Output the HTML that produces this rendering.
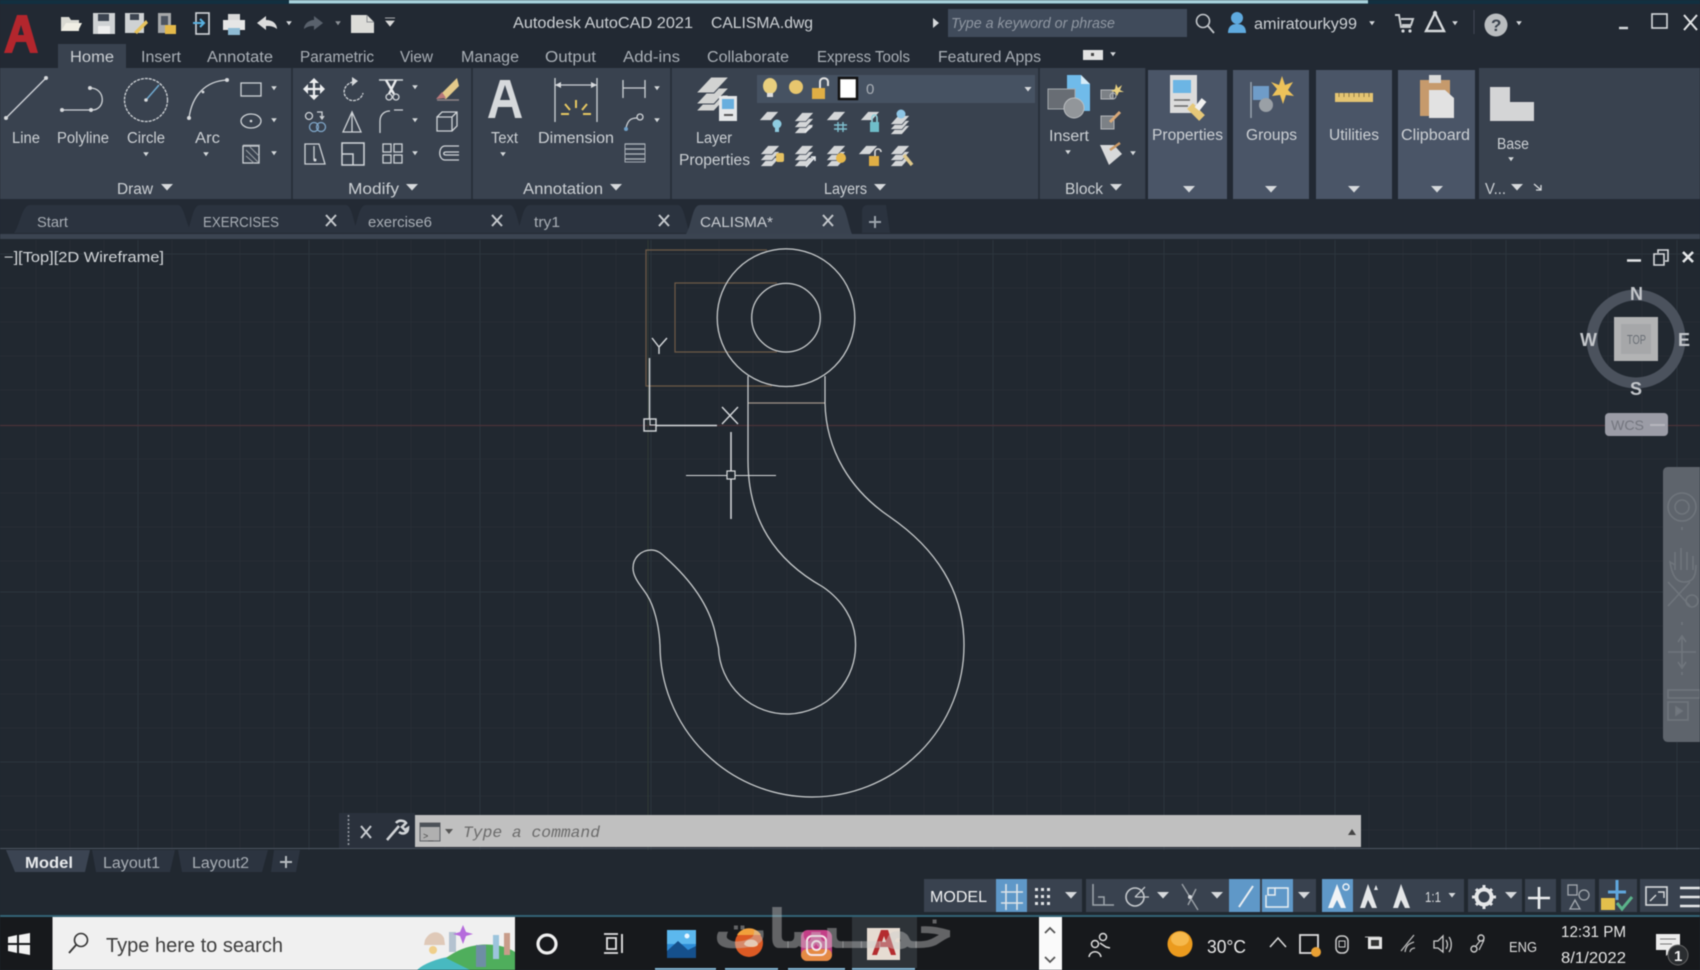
<!DOCTYPE html>
<html><head><meta charset="utf-8"><title>Autodesk AutoCAD 2021</title>
<style>
html,body{margin:0;padding:0;background:#212830;width:1700px;height:970px;overflow:hidden}
svg{display:block;filter:blur(.6px)}
text{font-family:"Liberation Sans",sans-serif;fill:#ccd0d4;font-size:15.5px}
.w{fill:none;stroke:#d6d9dc;stroke-width:1.6}
.t{fill:none;stroke:#cfd3d7;stroke-width:1.3}
.f{fill:#d6d9dc}
.g{stroke:#2c343d;stroke-width:1}
.m{stroke:#262d36;stroke-width:1}
.o{fill:none;stroke:#6e5a47;stroke-width:1.2}
.h{fill:none;stroke:#cdd0d1;stroke-width:1.25}
</style></head><body>
<svg width="1700" height="970" viewBox="0 0 1700 970" xmlns="http://www.w3.org/2000/svg">
<defs>
<path id="dn" d="M-3.5 -2 H3.5 L0 2.5Z" fill="#d6d9dc"/>
<path id="dnb" d="M-6 -3 H6 L0 3.500Z" fill="#d6d9dc"/>
<path id="dot" d="M-2.800 -1.800H2.800L0 2.200Z" fill="#d6d9dc"/>
<path id="p" d="M-2 -4.500H10L2 4.500H-10Z" fill="#d4d6d8" stroke="#39424f" stroke-width=".8"/>
<path id="P" d="M-1 -8H17L2 8H-16Z" fill="#d2d3d2" stroke="#39424f" stroke-width="1"/>
<clipPath id="sb"><rect x="52.500" y="917" width="462.500" height="53"/></clipPath>
</defs>

<rect width="1700" height="970" fill="#212830"/>

<!-- canvas grid -->
<g class="m">
<path d="M172 240V850M206 240V850M240 240V850M274 240V850M343 240V850M377 240V850M411 240V850M445 240V850M514 240V850M548 240V850M582 240V850M616 240V850M685 240V850M719 240V850M753 240V850M787 240V850M856 240V850M890 240V850M924 240V850M958 240V850M1027 240V850M1061 240V850M1095 240V850M1129 240V850M1198 240V850M1232 240V850M1266 240V850M1300 240V850M1369 240V850M1403 240V850M1437 240V850M1471 240V850M1540 240V850M1574 240V850M1608 240V850M1642 240V850M104 240V850M70 240V850M36 240V850"/>
<path d="M0 288H1700M0 322H1700M0 356H1700M0 390H1700M0 459H1700M0 493H1700M0 527H1700M0 561H1700M0 626H1700M0 660H1700M0 694H1700M0 728H1700M0 796H1700M0 830H1700"/>
</g>
<g class="g">
<path d="M138 240V850M309 240V850M480 240V850M651 240V850M822 240V850M993 240V850M1164 240V850M1335 240V850M1506 240V850M1677 240V850"/>
<path d="M0 254H1700M0 592H1700M0 762H1700"/>
</g>
<path d="M0 425.500H1700" stroke="#4a3338" stroke-width="1.200"/>
<path d="M648 240V850" stroke="#2f3a35" stroke-width="1"/>

<!-- drawing -->
<path class="o" d="M767 250H646V386H772"/>
<path class="o" d="M777 283H675V352H777"/>
<circle class="h" cx="786" cy="317.700" r="68.800"/>
<circle class="h" cx="786" cy="317.700" r="34.300"/>
<path d="M748 403H825" stroke="#a09488" stroke-width="1.200"/>
<path class="h" d="M825 376V403C826 450 850 490 890 517C935 548 964 590 964 645A152 152 0 0 1 660 645C659 625 654 606 647 595C642 587 633 578 633 568C633 558 641 550 651 550C657 550 661 553 665 557C692 581 709 606 715 632C716 638 717 641 718.500 648A68.500 68.500 0 0 0 855.500 643C855.500 620 842 600 823 587C775 560 748 520 748 460V376"/>
<!-- UCS icon -->
<g fill="none" stroke="#d6d9dc" stroke-width="1.400">
<path d="M649.500 358V419M656 425.500H717"/>
<rect x="644" y="419" width="12" height="12"/>
<path d="M650 419V425H656" stroke-width="1"/>
<path d="M722 407L738 424M738 407L722 424"/>
<path d="M652 338L659 347L667 338M659 347V354"/>
</g>
<!-- crosshair -->
<g fill="none" stroke="#d8dadc">
<path d="M731 432V471M731 479V519" stroke-width="1.500"/>
<path d="M686 475.500H727M735 475.500H776" stroke-width="1.100"/>
<rect x="727" y="471" width="8" height="8" stroke-width="1.200"/>
</g>

<!-- top strip -->
<rect width="1700" height="4" fill="#123040"/>
<rect x="289" width="1079" height="3.500" fill="#a6d0da"/>
<!-- title bar -->
<rect y="4" width="1700" height="64" fill="#222933"/>
<path d="M4 53L17 15H27L38 53H30L26 42H16L12 53ZM18 35H24L21 25Z" fill="#b3262d"/>

<!-- QAT -->
<path d="M61 17H69L71 20H79V31H61Z" fill="#d9d9d2"/><path d="M61 31L66 23H82L78 31Z" fill="#f0eee4"/>
<g><rect x="93" y="13" width="22" height="21" fill="#cfd2d4"/><rect x="98" y="14" width="11" height="7" fill="#3c4450"/><rect x="98" y="26" width="12" height="8" fill="#eee"/></g>
<g><rect x="125" y="13" width="19" height="20" fill="#cfd2d4"/><rect x="130" y="14" width="9" height="6" fill="#3c4450"/><path d="M134 32L146 20L148 23L137 34Z" fill="#e6c25c"/></g>
<g><rect x="158" y="13" width="13" height="20" fill="#a6a8aa"/><path d="M165 25H176V34H165Z" fill="#e4b94a"/><rect x="161" y="16" width="7" height="9" fill="#4c5460"/></g>
<g><rect x="196" y="13" width="13" height="21" fill="none" stroke="#d2d6da" stroke-width="1.600"/><path d="M193 23H203M200 19L204 23L200 27" fill="none" stroke="#58b0e0" stroke-width="2"/></g>
<g><rect x="228" y="14" width="12" height="6" fill="#d8d8d8"/><rect x="223" y="20" width="22" height="10" fill="#e6e6e6"/><rect x="228" y="28" width="12" height="7" fill="#8fbbd4"/></g>
<path d="M257 23L266 16V20C273 20 277 24 277 29C273 26 270 26 266 26V30Z" fill="#dcdcdc"/><use href="#dot" x="289" y="23"/>
<path d="M323 23L314 16V20C309 20 304 24 304 29C308 26 311 26 314 26V30Z" fill="#59616c"/><use href="#dot" x="338" y="23" opacity=".6"/>
<path d="M351 15H367L374 22V33H351Z" fill="#dcdcd8"/><path d="M367 15V22H374" fill="none" stroke="#8b8f94"/>
<path d="M385 18H395M386 21H394L390 26Z" fill="#d8d8d8" stroke="#d8d8d8" stroke-width=".8"/>

<text x="513" y="28" textLength="180" lengthAdjust="spacingAndGlyphs">Autodesk AutoCAD 2021</text>
<text x="711" y="28" textLength="102" lengthAdjust="spacingAndGlyphs">CALISMA.dwg</text>
<path d="M933 18L939 23L933 28Z" fill="#d6d9dc"/>
<rect x="948" y="9" width="239" height="28" fill="#404b5b"/>
<text x="951" y="28" textLength="164" lengthAdjust="spacingAndGlyphs" font-style="italic" style="fill:#8f97a2;font-size:14.500px">Type a keyword or phrase</text>
<circle cx="1203" cy="21" r="6.500" fill="none" stroke="#c3c7cb" stroke-width="1.600"/><path d="M1208 26L1214 33" stroke="#c3c7cb" stroke-width="1.800"/>
<circle cx="1237" cy="18" r="6" fill="#5faadf"/><path d="M1228 33C1228 26 1232 24 1237 24C1242 24 1246 26 1246 33Z" fill="#5faadf"/>
<text x="1254" y="29" textLength="103" lengthAdjust="spacingAndGlyphs">amiratourky99</text>
<use href="#dot" x="1372" y="23"/>
<path d="M1395 15H1399L1401 27H1411M1401 19H1413L1411 25H1402" fill="none" stroke="#c6cacd" stroke-width="2"/><circle cx="1403" cy="31" r="1.600" class="f"/><circle cx="1410" cy="31" r="1.600" class="f"/>
<path d="M1435 13L1444 31H1426Z" fill="none" stroke="#d6d9dc" stroke-width="2.400"/><circle cx="1435" cy="13" r="2" class="f"/>
<use href="#dot" x="1455" y="23"/>
<path d="M1474 10V34" stroke="#3f4753"/>
<circle cx="1496" cy="25" r="11.500" fill="#b9bcbf"/>
<text x="1491" y="31" style="fill:#3a424d;font-size:17px;font-weight:bold">?</text>
<use href="#dot" x="1519" y="23"/>
<path d="M1619 28H1628" stroke="#d6d9dc" stroke-width="2.400"/>
<rect x="1652" y="14" width="15" height="14" fill="none" stroke="#d6d9dc" stroke-width="1.600"/>
<path d="M1684 15L1697 30M1697 15L1684 30" stroke="#e2e4e6" stroke-width="2"/>

<!-- menu -->
<rect x="58" y="44" width="68" height="25" fill="#39424f"/>
<text x="70" y="62" textLength="44" lengthAdjust="spacingAndGlyphs">Home</text>
<g>
<text x="141" y="62" textLength="40" lengthAdjust="spacingAndGlyphs" style="fill:#aab0b7">Insert</text>
<text x="207" y="62" textLength="66" lengthAdjust="spacingAndGlyphs" style="fill:#aab0b7">Annotate</text>
<text x="300" y="62" textLength="74" lengthAdjust="spacingAndGlyphs" style="fill:#aab0b7">Parametric</text>
<text x="400" y="62" textLength="33" lengthAdjust="spacingAndGlyphs" style="fill:#aab0b7">View</text>
<text x="461" y="62" textLength="58" lengthAdjust="spacingAndGlyphs" style="fill:#aab0b7">Manage</text>
<text x="545" y="62" textLength="51" lengthAdjust="spacingAndGlyphs" style="fill:#aab0b7">Output</text>
<text x="623" y="62" textLength="57" lengthAdjust="spacingAndGlyphs" style="fill:#aab0b7">Add-ins</text>
<text x="707" y="62" textLength="82" lengthAdjust="spacingAndGlyphs" style="fill:#aab0b7">Collaborate</text>
<text x="817" y="62" textLength="93" lengthAdjust="spacingAndGlyphs" style="fill:#aab0b7">Express Tools</text>
<text x="938" y="62" textLength="103" lengthAdjust="spacingAndGlyphs" style="fill:#aab0b7">Featured Apps</text>
</g>
<rect x="1083" y="50" width="20" height="10" fill="#e2e2e2"/><rect x="1091" y="53" width="3" height="3" fill="#444"/><use href="#dot" x="1113" y="54"/>

<!-- ribbon -->
<rect y="68" width="1700" height="131" fill="#39424f"/>
<path d="M292 68V199M472 68V199M671 68V199M1039 68V199M1146 68V199" stroke="#262d37" stroke-width="1.600"/>
<rect x="1146" y="68" width="333" height="131" fill="#222933"/>
<rect x="1148" y="70" width="79" height="129" fill="#4a5567"/>
<rect x="1233" y="70" width="76" height="129" fill="#4a5567"/>
<rect x="1316" y="70" width="76" height="129" fill="#4a5567"/>
<rect x="1398" y="70" width="77" height="129" fill="#4a5567"/>
<rect x="1479" y="68" width="221" height="131" fill="#39424f"/>
<!-- layer dropdown -->
<rect x="757" y="75" width="278" height="28" fill="#465262"/>

<!-- Draw icons -->
<path class="t" d="M6 118L46 78"/><circle cx="6" cy="118" r="2" class="f"/><circle cx="46" cy="78" r="2" class="f"/>
<path class="t" d="M62 110H92C106 110 106 88 90 88"/><circle cx="62" cy="110" r="2" class="f"/><circle cx="91" cy="110" r="2" class="f"/><circle cx="90" cy="88" r="2" class="f"/>
<circle class="t" cx="146" cy="100" r="21.500" stroke-dasharray="3 1"/><path d="M146 100L159 85" stroke="#6fa9cf" stroke-width="1.500"/><circle cx="146" cy="100" r="1.800" class="f"/>
<path class="t" d="M189 118C192 96 205 81 227 80"/><circle cx="189" cy="118" r="2" class="f"/><circle cx="227" cy="80" r="2" class="f"/><circle cx="203" cy="92" r="1.400" class="f"/>
<rect class="t" x="241" y="83" width="20" height="13"/><use href="#dot" x="274" y="88"/>
<ellipse class="t" cx="251" cy="121" rx="10" ry="7"/><circle cx="251" cy="121" r="1.300" class="f"/><use href="#dot" x="274" y="120"/>
<rect class="t" x="243" y="146" width="16" height="17"/><path d="M243 145H260M246 150L258 162M246 156L254 163M250 147L259 156" stroke="#9aa0a6"/><use href="#dot" x="274" y="153"/>
<text x="12" y="143" textLength="28" lengthAdjust="spacingAndGlyphs">Line</text>
<text x="57" y="143" textLength="52" lengthAdjust="spacingAndGlyphs">Polyline</text>
<text x="127" y="143" textLength="38" lengthAdjust="spacingAndGlyphs">Circle</text>
<text x="195" y="143" textLength="25" lengthAdjust="spacingAndGlyphs">Arc</text>
<use href="#dot" x="146" y="154"/><use href="#dot" x="206" y="154"/>
<text x="117" y="194" textLength="36" lengthAdjust="spacingAndGlyphs">Draw</text><use href="#dnb" x="167" y="187"/>

<!-- Modify icons -->
<path d="M314 80V98M305 89H323" stroke="#eceef0" stroke-width="2.200"/><path d="M314 78L309 83H319ZM314 100L309 95H319ZM303 89L308 84V94ZM325 89L320 84V94Z" fill="#eceef0"/>
<path class="t" d="M353 82C344 84 341 94 348 99C354 103 362 99 363 93" stroke-dasharray="3 1"/><path d="M352 77L358 81L352 86Z" class="f"/>
<path d="M379 80H403" stroke="#cfd3d7" stroke-width="1.500"/><path d="M386 80L394 94M396 80L389 94" stroke="#e8eaec" stroke-width="2.400"/><circle cx="389" cy="97" r="3" class="t"/><circle cx="396" cy="97" r="3" class="t"/><use href="#dot" x="415" y="87"/>
<path d="M457 78L459 86L446 99L439 96Z" fill="#e4c98a"/><path d="M442 92L436 99L446 98Z" fill="#b9787a"/><path d="M437 100H459" stroke="#8d8488" stroke-width="1.400"/>
<g class="t"><circle cx="309" cy="116" r="3.500"/><path d="M317 112H322V118M320 116L322 119L324 116"/><circle cx="314" cy="127" r="4.500" stroke="#7fa6c8"/><circle cx="321" cy="127" r="4.500" stroke="#7fa6c8"/></g>
<path class="t" d="M352 112L343 132H361ZM352 112V132"/>
<path class="t" d="M380 133V121C380 115 384 111 390 111M394 110H403"/><use href="#dot" x="415" y="120"/>
<path class="t" d="M437 131V117H452V131ZM437 117L442 112H457V126L452 131M452 117L457 112"/>
<path class="t" d="M305 144H319L325 164H305ZM314 146V160"/><circle cx="315" cy="160" r="1.500" class="f"/>
<path d="M342 143H364V165H342ZM342 154H353V165" fill="none" stroke="#d2d6da" stroke-width="1.500"/>
<g class="t"><rect x="383" y="144" width="8" height="8"/><rect x="394" y="144" width="8" height="8"/><rect x="383" y="155" width="8" height="8"/><rect x="394" y="155" width="8" height="8"/></g><use href="#dot" x="415" y="153"/>
<path class="t" d="M459 146H445C438 146 438 160 445 160H459M459 152H446C443 152 443 155 446 155H459" stroke="#b4bcc4"/>
<text x="348" y="194" textLength="51" lengthAdjust="spacingAndGlyphs">Modify</text><use href="#dnb" x="412" y="187"/>

<!-- Annotation -->
<path d="M488 118L500 80H510L522 118H515L512 107H498L495 118ZM500 100H510L505 85Z" fill="#d6d9dc"/>
<path class="t" d="M555 78V122M597 78V122M555 85H597"/><path d="M555 85L561 82V88ZM597 85L591 82V88Z" class="f"/>
<g stroke="#e6c862" stroke-width="2"><path d="M576 100V108M565 104L570 110M587 104L582 110M561 114H569M583 114H591"/></g>
<path class="t" d="M623 80V98M645 80V98M623 88H645"/><use href="#dot" x="657" y="88"/>
<path class="t" d="M626 128C628 119 632 118 637 118"/><circle cx="626" cy="129" r="2" fill="#6fa0c8"/><circle cx="640" cy="117" r="3" class="t"/><use href="#dot" x="657" y="120"/>
<g stroke="#a6adb4"><path d="M625 144H645M625 149H645M625 154H645M625 159H645" stroke-width="1.400" fill="none"/><rect x="625" y="144" width="20" height="18" fill="none"/></g>
<text x="491" y="143" textLength="27" lengthAdjust="spacingAndGlyphs">Text</text>
<text x="538" y="143" textLength="76" lengthAdjust="spacingAndGlyphs">Dimension</text>
<use href="#dot" x="503" y="154"/>
<text x="523" y="194" textLength="80" lengthAdjust="spacingAndGlyphs">Annotation</text><use href="#dnb" x="616" y="187"/>

<!-- Layers -->
<use href="#P" x="712" y="103"/><use href="#P" x="712" y="96"/><use href="#P" x="712" y="85"/>
<rect x="719" y="96" width="18" height="25" fill="#e4e6e8"/><rect x="722" y="99" width="12" height="10" fill="#67aede"/><rect x="724" y="114" width="9" height="2" fill="#555"/>
<text x="696" y="143" textLength="36" lengthAdjust="spacingAndGlyphs">Layer</text>
<text x="679" y="165" textLength="71" lengthAdjust="spacingAndGlyphs">Properties</text>
<ellipse cx="770" cy="86" rx="7" ry="8" fill="#e9cf7e"/><rect x="767" y="93" width="6" height="4" fill="#ddd"/>
<circle cx="796" cy="87" r="7" fill="#e7c66e"/>
<rect x="812" y="88" width="13" height="11" fill="#dfae45"/><path d="M820 88V82C820 77 828 77 828 82V86" fill="none" stroke="#e2e2e2" stroke-width="2"/>
<rect x="839" y="78" width="18" height="21" fill="#fff" stroke="#111" stroke-width="2.500"/>
<text x="866" y="94" style="fill:#a8aeb5;font-size:15px">0</text>
<use href="#dn" x="1028" y="89"/>
<!-- row 1 -->
<use href="#p" x="769" y="116"/><circle cx="777" cy="124" r="4.500" fill="#8ecbe0"/><rect x="775" y="128" width="4" height="4" fill="#8ecbe0"/>
<use href="#p" x="804" y="129"/><use href="#p" x="804" y="123"/><use href="#p" x="804" y="117"/><path d="M805 132L812 126" stroke="#e4e6e8" stroke-width="2"/>
<use href="#p" x="836" y="116"/><path d="M838 122V132M843 122V132M834 125H847M834 129H847" stroke="#7fc0cf" stroke-width="1.400"/>
<use href="#p" x="870" y="116"/><rect x="870" y="122" width="9" height="10" fill="#6fbdc9"/><path d="M872 122V118C872 114 877 114 877 118V122" fill="none" stroke="#8ecfd8" stroke-width="1.600"/>
<use href="#p" x="900" y="130"/><use href="#p" x="900" y="125"/><use href="#p" x="900" y="120"/><circle cx="901" cy="114" r="4.500" fill="#8ec6e6"/>
<!-- row 2 -->
<use href="#p" x="770" y="162"/><use href="#p" x="770" y="156"/><use href="#p" x="770" y="150"/><rect x="776" y="153" width="8" height="9" rx="2" fill="#e6c262"/>
<use href="#p" x="804" y="162"/><use href="#p" x="804" y="156"/><use href="#p" x="804" y="150"/><path d="M806 167L815 157M811 157H815V161" stroke="#e6eaee" stroke-width="1.500" fill="none"/>
<use href="#p" x="836" y="162"/><use href="#p" x="836" y="156"/><use href="#p" x="836" y="150"/><circle cx="841" cy="158" r="5" fill="#e6b84c"/>
<use href="#p" x="868" y="150"/><rect x="869" y="156" width="10" height="10" fill="#dfae45"/><path d="M875 156V152C875 148 881 148 881 152" fill="none" stroke="#ddd" stroke-width="1.600"/>
<use href="#p" x="900" y="162"/><use href="#p" x="900" y="156"/><use href="#p" x="900" y="150"/><path d="M904 155L912 165" stroke="#dfc88a" stroke-width="3.500"/>
<text x="824" y="194" textLength="43" lengthAdjust="spacingAndGlyphs">Layers</text><use href="#dnb" x="880" y="187"/>

<!-- Block -->
<path d="M1067 75H1081L1090 84V111H1067Z" fill="#70bbea"/><path d="M1081 75V84H1090" fill="#d7ecf8"/>
<rect x="1048" y="89" width="27" height="20" fill="#686d74" stroke="#a6aaae"/>
<circle cx="1074" cy="108" r="10" fill="#92969a" stroke="#bcbfc2"/>
<rect x="1101" y="90" width="12" height="9" fill="#7c8186" stroke="#b4b7ba"/><circle cx="1113" cy="96" r="3" fill="none" stroke="#b4b7ba"/><path d="M1116 84L1118 88L1122 85L1120 90L1124 92L1119 92L1117 96L1115 92L1111 91L1115 89Z" fill="#e8d080"/>
<rect x="1101" y="116" width="13" height="13" fill="#7c8186" stroke="#b4b7ba"/><path d="M1110 122L1120 112" stroke="#d8a878" stroke-width="3"/>
<path d="M1100 145H1114L1122 154L1109 165Z" fill="#d8d9da"/><path d="M1110 150L1120 143" stroke="#cc9a66" stroke-width="2.500"/>
<use href="#dot" x="1133" y="153"/>
<text x="1049" y="141" textLength="40" lengthAdjust="spacingAndGlyphs">Insert</text>
<use href="#dot" x="1068" y="152"/>
<text x="1065" y="194" textLength="38" lengthAdjust="spacingAndGlyphs">Block</text><use href="#dnb" x="1116" y="187"/>

<!-- Properties -->
<rect x="1170" y="75" width="27" height="38" fill="#dcdcdc"/><rect x="1173" y="80" width="18" height="13" fill="#6cb5e4"/><path d="M1174 100H1190M1174 106H1188" stroke="#666" stroke-width="1.400"/>
<path d="M1190 106L1202 118" stroke="#e6c878" stroke-width="8"/><path d="M1204 100L1197 109" stroke="#f0f0f0" stroke-width="6"/>
<text x="1152" y="140" textLength="71" lengthAdjust="spacingAndGlyphs">Properties</text>
<use href="#dnb" x="1189" y="189"/>
<!-- Groups -->
<path d="M1251 82V118" stroke="#9ca6b2" stroke-width="1.400"/>
<rect x="1253" y="86" width="16" height="14" fill="#6f9cc8"/>
<circle cx="1266" cy="105" r="7" fill="#9aa0a6"/>
<path d="M1282 76L1285 85L1293 82L1288 90L1294 96L1286 95L1283 104L1280 95L1272 96L1277 89L1271 82L1279 85Z" fill="#edc25a"/>
<text x="1246" y="140" textLength="51" lengthAdjust="spacingAndGlyphs">Groups</text>
<use href="#dnb" x="1271" y="189"/>
<!-- Utilities -->
<rect x="1335" y="93" width="38" height="9" fill="#e4c472"/><path d="M1339 93V97M1344 93V97M1349 93V97M1354 93V97M1359 93V97M1364 93V97M1369 93V97" stroke="#8f7a46"/>
<text x="1329" y="140" textLength="50" lengthAdjust="spacingAndGlyphs">Utilities</text>
<use href="#dnb" x="1354" y="189"/>
<!-- Clipboard -->
<rect x="1420" y="80" width="30" height="36" fill="#c69a6c"/><rect x="1429" y="75" width="12" height="8" fill="#d9d9d9"/>
<path d="M1429 90H1445L1454 98V118H1429Z" fill="#e2e2e2"/>
<text x="1401" y="140" textLength="69" lengthAdjust="spacingAndGlyphs">Clipboard</text>
<use href="#dnb" x="1437" y="189"/>
<!-- Base -->
<path d="M1490 87H1510V102H1534V121H1490Z" fill="#d4d5d6"/>
<text x="1497" y="149" textLength="32" lengthAdjust="spacingAndGlyphs">Base</text>
<use href="#dot" x="1511" y="159"/>
<text x="1485" y="194" textLength="21" lengthAdjust="spacingAndGlyphs">V...</text><use href="#dnb" x="1517" y="187"/>
<path d="M1534 184L1541 190M1541 185V190H1536" stroke="#d6d9dc" fill="none" stroke-width="1.300"/>

<!-- doc tabs -->
<rect y="199" width="1700" height="35" fill="#232a34"/>
<g fill="#2b333f">
<path d="M14 233C20 225 22 205 30 205H178C184 205 186 225 192 233Z"/>
<path d="M186 233C192 225 192 205 200 205H346C352 205 354 225 358 233Z"/>
<path d="M352 233C358 225 358 205 366 205H510C516 205 518 225 522 233Z"/>
<path d="M516 233C522 225 522 205 530 205H678C684 205 686 225 690 233Z"/>
<path d="M862 233V212C862 207 864 205 868 205H886L890 233Z"/>
</g>
<path d="M686 234C692 225 692 205 700 205H840C846 205 848 225 852 234Z" fill="#39424f"/>
<rect y="234" width="1700" height="5" fill="#3b4451"/>
<g>
<text x="37" y="227" textLength="31" lengthAdjust="spacingAndGlyphs" style="fill:#a8aeb5;font-size:15px">Start</text>
<text x="203" y="227" textLength="76" lengthAdjust="spacingAndGlyphs" style="fill:#a8aeb5;font-size:15px">EXERCISES</text>
<text x="368" y="227" textLength="64" lengthAdjust="spacingAndGlyphs" style="fill:#a8aeb5;font-size:15px">exercise6</text>
<text x="534" y="227" textLength="26" lengthAdjust="spacingAndGlyphs" style="fill:#a8aeb5;font-size:15px">try1</text>
<text x="700" y="227" textLength="73" lengthAdjust="spacingAndGlyphs" style="fill:#c8ccd1;font-size:15px">CALISMA*</text>
</g>
<path d="M326 215L336 226M336 215L326 226M492 215L502 226M502 215L492 226M659 215L669 226M669 215L659 226M823 215L833 226M833 215L823 226" stroke="#c4c8cc" stroke-width="2"/>
<path d="M875 216V228M869 222H881" stroke="#9aa2aa" stroke-width="2"/>

<!-- viewport label -->
<text x="4" y="262" textLength="160" lengthAdjust="spacingAndGlyphs" style="fill:#d4d7da;font-size:14.500px">−][Top][2D Wireframe]</text>
<path d="M1627 260.500H1641" stroke="#e2e4e6" stroke-width="2.500"/>
<path d="M1654 254H1664V265H1654ZM1658 253V250H1668V261H1665" fill="none" stroke="#d8dadc" stroke-width="1.600"/>
<path d="M1683 252L1693 262M1693 252L1683 262" stroke="#e4e6e8" stroke-width="2.600"/>

<!-- nav cube -->
<circle cx="1636" cy="339" r="44" fill="none" stroke="#4b525d" stroke-width="11"/>
<rect x="1614" y="317" width="44" height="44" fill="#b2b3b4"/>
<rect x="1621" y="324" width="30" height="30" fill="#a6a7a9"/>
<text x="1627" y="344" textLength="19" lengthAdjust="spacingAndGlyphs" style="fill:#6a6f76;font-size:13px">TOP</text>
<text x="1630" y="300" style="fill:#c3c6ca;font-size:18px;font-weight:bold">N</text>
<text x="1580" y="346" style="fill:#c3c6ca;font-size:18px;font-weight:bold">W</text>
<text x="1678" y="346" style="fill:#c3c6ca;font-size:18px;font-weight:bold">E</text>
<text x="1630" y="395" style="fill:#c3c6ca;font-size:18px;font-weight:bold">S</text>
<rect x="1605" y="413" width="63" height="23" rx="4" fill="#9b9ca6"/>
<text x="1611" y="430" textLength="33" lengthAdjust="spacingAndGlyphs" style="fill:#74767f;font-size:14px">WCS</text>
<path d="M1650 425H1665" stroke="#b5b6bd" stroke-width="2"/>

<!-- nav bar -->
<path d="M1663 472C1663 469 1665 467 1668 467H1700V742H1668C1665 742 1663 740 1663 737Z" fill="#5e646c"/>
<g fill="none" stroke="#6f757c" stroke-width="1.600">
<circle cx="1682" cy="507" r="14"/><circle cx="1682" cy="507" r="7"/>
<path d="M1682 527V530M1682 622V625M1682 672V675"/>
<path d="M1675 570V552M1681 570V548M1687 570V552M1693 570V556M1675 565L1670 562C1672 575 1676 582 1684 582C1692 582 1696 578 1696 565"/>
<path d="M1668 582L1690 606M1668 606L1690 582"/><circle cx="1692" cy="601" r="6"/>
<path d="M1682 636V668M1668 652H1696M1678 642L1682 636L1686 642M1678 662L1682 668L1686 662"/>
<rect x="1668" y="690" width="32" height="8"/><rect x="1668" y="702" width="20" height="18"/>
<path d="M1676 707L1682 711L1676 715Z" fill="#727880"/>
</g>

<!-- command line -->
<path d="M0 848.500H1700" stroke="#4c5460" stroke-width="1"/>
<rect x="339" y="813" width="76" height="35" fill="#2a313c"/>
<path d="M348.500 815V846" stroke="#9ea3a9" stroke-width="1.500" stroke-dasharray="2 2"/>
<path d="M361 826L371 838M371 826L361 838" stroke="#c8ccd0" stroke-width="2"/>
<path d="M387 840L399 826M396 823C399 819 405 821 406 823L402 827L405 830L408 828C408 833 403 835 399 832" stroke="#d0d3d6" stroke-width="2.600" fill="none"/>
<rect x="415" y="815" width="946" height="32" fill="#c0c0c0"/>
<rect x="420" y="823" width="20" height="18" fill="#b0b0b0" stroke="#5e6166"/><rect x="420" y="823" width="20" height="4" fill="#4c5158"/><text x="423" y="839" style="font-size:9px;fill:#444">&gt;_</text>
<path d="M445 829H453L449 834Z" fill="#555"/>
<text x="463" y="837" textLength="137" lengthAdjust="spacingAndGlyphs" font-style="italic" style="font-family:'Liberation Mono',monospace;fill:#6b6b6b;font-size:16px">Type a command</text>
<path d="M1348 835H1356L1352 829Z" fill="#444"/>

<!-- layout tabs -->
<path d="M6 850H90L85 872H15Z" fill="#3b4452"/>
<path d="M92 850H175L170 872H96Z" fill="#2c3440"/>
<path d="M178 850H268L262 872H182Z" fill="#2c3440"/>
<path d="M274 850H300L296 872H271Z" fill="#2c3440"/>
<text x="25" y="868" textLength="48" lengthAdjust="spacingAndGlyphs" style="fill:#e8eaec;font-weight:bold">Model</text>
<text x="103" y="868" textLength="57" lengthAdjust="spacingAndGlyphs" style="fill:#a8aeb5">Layout1</text>
<text x="192" y="868" textLength="57" lengthAdjust="spacingAndGlyphs" style="fill:#a8aeb5">Layout2</text>
<path d="M286 856V868M280 862H292" stroke="#b4b9be" stroke-width="2"/>

<!-- status bar -->
<g fill="#39424f">
<rect x="924" y="879" width="158" height="33"/>
<rect x="1086" y="879" width="230" height="33"/>
<rect x="1322" y="879" width="142" height="33"/>
<rect x="1468" y="879" width="54" height="33"/>
<rect x="1525" y="879" width="31" height="33"/>
<rect x="1561" y="879" width="34" height="33"/>
<rect x="1599" y="879" width="38" height="33"/>
<rect x="1640" y="879" width="60" height="33"/>
</g>
<g fill="#5f98c8">
<rect x="996" y="879" width="31" height="33"/>
<rect x="1229" y="879" width="31" height="33"/>
<rect x="1262" y="879" width="31" height="33"/>
<rect x="1322" y="879" width="31" height="33"/>
</g>
<text x="930" y="902" textLength="57" lengthAdjust="spacingAndGlyphs" style="fill:#f0f1f2;font-size:16px">MODEL</text>
<path d="M1006 884V910M1017 884V910M1001 892H1023M1001 903H1023" stroke="#dde3e8" stroke-width="1.600"/>
<g fill="#e2e4e6"><rect x="1035" y="888" width="3" height="3"/><rect x="1041" y="888" width="3" height="3"/><rect x="1047" y="888" width="3" height="3"/><rect x="1035" y="895" width="3" height="3"/><rect x="1041" y="895" width="3" height="3"/><rect x="1047" y="895" width="3" height="3"/><rect x="1035" y="902" width="3" height="3"/><rect x="1041" y="902" width="3" height="3"/><rect x="1047" y="902" width="3" height="3"/></g>
<use href="#dnb" x="1071" y="895"/>
<path d="M1093 884V905H1114M1098 897H1104V905" stroke="#9ea5ac" stroke-width="1.500" fill="none"/>
<circle cx="1135" cy="897" r="9" fill="none" stroke="#c4c8cc" stroke-width="1.600"/><path d="M1135 897H1149M1135 897L1145 887" stroke="#c4c8cc" stroke-width="1.300"/>
<use href="#dnb" x="1163" y="895"/>
<path d="M1182 884L1198 910M1188 905L1196 889" stroke="#9aa0a6" stroke-width="1.400"/><circle cx="1190" cy="897" r="2" fill="#d6d9dc"/>
<use href="#dnb" x="1217" y="895"/>
<path d="M1239 907L1253 886" stroke="#e8edf1" stroke-width="2"/>
<rect x="1268" y="888" width="7" height="7" fill="none" stroke="#e8edf1" stroke-width="1.500"/><path d="M1275 888H1288V907H1266V895" fill="none" stroke="#e8edf1" stroke-width="1.500"/>
<use href="#dnb" x="1304" y="895"/>
<path d="M1337 884L1328 908H1333L1337 900L1341 908H1346Z" fill="#f0f3f6"/><circle cx="1346" cy="887" r="3" fill="none" stroke="#f0f3f6" stroke-width="1.400"/>
<path d="M1368 884L1360 908H1365L1368 900L1372 908H1377Z" fill="#e4e6e8"/><path d="M1376 885L1378 890L1374 890Z" fill="#e4e6e8"/>
<path d="M1401 884L1393 908H1398L1401 900L1405 908H1410Z" fill="#e4e6e8"/>
<text x="1425" y="902" textLength="16" lengthAdjust="spacingAndGlyphs" style="fill:#d8dadc;font-size:15px">1:1</text>
<use href="#dn" x="1452" y="895"/>
<circle cx="1484" cy="897" r="7.500" fill="none" stroke="#e4e6e8" stroke-width="4"/><path d="M1484 885V889M1484 905V909M1472 897H1476M1492 897H1496M1476 889L1479 892M1489 902L1492 905M1492 889L1489 892M1479 902L1476 905" stroke="#e4e6e8" stroke-width="3"/>
<use href="#dnb" x="1511" y="895"/>
<path d="M1539 887V909M1528 898H1550" stroke="#eceef0" stroke-width="2.600"/>
<rect x="1568" y="885" width="9" height="10" fill="none" stroke="#a2a8ae" stroke-width="1.300"/><circle cx="1584" cy="895" r="5" fill="none" stroke="#a2a8ae" stroke-width="1.300"/><path d="M1570 909L1575 900L1580 909Z" fill="none" stroke="#a2a8ae" stroke-width="1.300"/>
<path d="M1608 892H1626M1617 880V900" stroke="#5fa6dc" stroke-width="3"/><rect x="1601" y="898" width="14" height="12" fill="#e3c04c"/><path d="M1617 903L1622 909L1632 897" fill="none" stroke="#5bb38a" stroke-width="3"/>
<rect x="1646" y="887" width="21" height="18" fill="none" stroke="#d8dadc" stroke-width="1.600"/><path d="M1658 892H1664V898M1650 901L1656 895" stroke="#d8dadc" stroke-width="1.400" fill="none"/>
<path d="M1680 888H1700M1680 897H1700M1680 906H1700" stroke="#e6e8ea" stroke-width="2.600"/>

<!-- taskbar -->
<rect y="912" width="1700" height="3" fill="#1f2830"/>
<rect y="915" width="1700" height="2" fill="#336274"/>
<rect y="917" width="1700" height="53" fill="#17191c"/>
<path d="M8 937L17 935V943H8ZM19 935L30 933V943H19ZM8 945H17V953L8 951ZM19 945H30V955L19 953Z" fill="#f2f2f2"/>
<rect x="52.500" y="917" width="462.500" height="53" fill="#f0f0f0"/>
<circle cx="81" cy="940" r="6.500" fill="none" stroke="#333" stroke-width="1.600"/><path d="M76 945L69 953" stroke="#333" stroke-width="1.800"/>
<text x="106" y="952" textLength="177" lengthAdjust="spacingAndGlyphs" style="fill:#3e3e3e;font-size:20px">Type here to search</text>
<g clip-path="url(#sb)">
<ellipse cx="478" cy="980" rx="66" ry="26" fill="#48b9c0"/><path d="M446 958C470 940 500 942 515 952V970H470Z" fill="#4fae5c"/>
<rect x="449" y="932" width="7" height="20" fill="#b4c2d0"/><rect x="493" y="935" width="6" height="24" fill="#9cc4dc"/><rect x="504" y="933" width="6" height="22" fill="#c89c8a"/><rect x="476" y="945" width="10" height="22" fill="#6e8ea4"/>
<path d="M463 925L466 932L473 934L466 936L463 944L460 936L453 934L460 932Z" fill="#b56bdc"/><path d="M425 940C430 930 440 930 444 938L445 945H424Z" fill="#dfc9b8"/><circle cx="433" cy="950" r="4" fill="#efcf8a"/>
</g>
<circle cx="547" cy="944" r="9" fill="none" stroke="#f0f0f0" stroke-width="3.200"/>
<path d="M604 934H618M604 953H618M607 938H616V949H607ZM622 934V953" fill="none" stroke="#e4e4e4" stroke-width="1.800"/>
<rect x="667" y="930" width="29" height="28" fill="#2e8cd6"/><rect x="667" y="930" width="29" height="14" fill="#5cb8ee"/><path d="M667 958V951L678 941L688 950L696 946V958Z" fill="#15508c"/><circle cx="687" cy="936" r="2.500" fill="#e8f6ff"/>
<circle cx="749" cy="943" r="14" fill="#dc5a24"/><path d="M737 935C742 926 756 926 761 935Z" fill="#f1a03c"/><path d="M744 944C746 938 756 938 758 944C758 948 746 948 744 944Z" fill="#f4c9a6"/>
<rect x="801" y="930" width="31" height="31" rx="7" fill="#c43f87"/><rect x="801" y="949" width="31" height="12" rx="6" fill="#e58a44"/><rect x="807" y="936" width="19" height="19" rx="5" fill="none" stroke="#f6e6ea" stroke-width="2"/><circle cx="816.500" cy="945.500" r="4.500" fill="none" stroke="#f6e6ea" stroke-width="2"/>
<rect x="852" y="917" width="65" height="51" fill="#2e3338"/>
<rect x="867" y="928" width="33" height="32" fill="#e6dcd2"/><path d="M872 955L881 930H888L896 955H891L888 947H880L877 955ZM882 942H886L884 936Z" fill="#b42c2f"/>
<g fill="#84b9d8"><rect x="655" y="968" width="61" height="2"/><rect x="725" y="968" width="53" height="2"/><rect x="788" y="968" width="57" height="2"/><rect x="852" y="968" width="63" height="2"/></g>

<!-- watermark -->
<text x="955" y="948" direction="rtl" style="font-family:'DejaVu Sans',sans-serif;font-weight:bold;font-size:54px;fill:rgba(205,205,205,.42)">خمــسات</text>

<!-- scroll strip -->
<rect x="1039" y="917" width="23" height="53" fill="#fafafa"/>
<path d="M1045 933L1050 928L1055 933M1045 957L1050 962L1055 957" fill="none" stroke="#555" stroke-width="1.800"/>

<!-- tray -->
<circle cx="1103" cy="937" r="3.500" fill="none" stroke="#ddd" stroke-width="1.500"/><circle cx="1095" cy="944" r="3.500" fill="none" stroke="#ddd" stroke-width="1.500"/><path d="M1089 957C1090 950 1100 950 1101 957M1100 943L1106 947L1110 948" fill="none" stroke="#ddd" stroke-width="1.500"/>
<ellipse cx="1180" cy="944" rx="12.500" ry="13" fill="#eb9b1e"/><ellipse cx="1180" cy="939" rx="9" ry="7" fill="#f6b94c"/>
<text x="1207" y="953" textLength="39" lengthAdjust="spacingAndGlyphs" style="fill:#e8e8e8;font-size:18px">30°C</text>
<path d="M1270 947L1278 938L1286 947" fill="none" stroke="#ddd" stroke-width="1.500"/>
<rect x="1300" y="935" width="18" height="18" fill="none" stroke="#ddd" stroke-width="1.800"/><circle cx="1316" cy="952" r="5" fill="#e9a033"/>
<rect x="1336" y="936" width="12" height="17" rx="5" fill="none" stroke="#ccc" stroke-width="1.500"/><rect x="1339" y="941" width="6" height="6" fill="none" stroke="#ccc"/>
<rect x="1368" y="937" width="14" height="12" fill="#e4e4e4"/><path d="M1365 937H1380" stroke="#bbb"/><rect x="1371" y="940" width="8" height="6" fill="#333"/>
<path d="M1401 951L1414 935M1405 952C1406 946 1408 944 1414 942M1410 952C1410 950 1412 948 1415 948" fill="none" stroke="#bbb" stroke-width="1.300"/>
<path d="M1434 941H1438L1443 936V952L1438 948H1434ZM1446 940C1448 943 1448 946 1446 949M1449 937C1452 941 1452 948 1449 952" fill="none" stroke="#ccc" stroke-width="1.300"/>
<circle cx="1481" cy="938" r="3" fill="none" stroke="#ccc" stroke-width="1.400"/><circle cx="1474" cy="949" r="3" fill="none" stroke="#ccc" stroke-width="1.400"/><path d="M1476 946L1480 941M1484 940L1479 950" stroke="#ccc" stroke-width="1.200" fill="none"/>
<text x="1509" y="952" textLength="28" lengthAdjust="spacingAndGlyphs" style="fill:#dcdcdc;font-size:15px">ENG</text>
<text x="1561" y="937" textLength="65" lengthAdjust="spacingAndGlyphs" style="fill:#e6e6e6;font-size:15.500px">12:31 PM</text>
<text x="1561" y="963" textLength="65" lengthAdjust="spacingAndGlyphs" style="fill:#e6e6e6;font-size:15.500px">8/1/2022</text>
<path d="M1656 934H1680V950H1672L1666 956V950H1656Z" fill="#ececec"/><path d="M1660 939H1676M1660 944H1672" stroke="#777"/>
<circle cx="1678" cy="955" r="10" fill="#2a2d30" stroke="#666"/>
<text x="1674" y="961" style="fill:#f0f0f0;font-size:15px;font-weight:bold">1</text>
</svg>
</body></html>
